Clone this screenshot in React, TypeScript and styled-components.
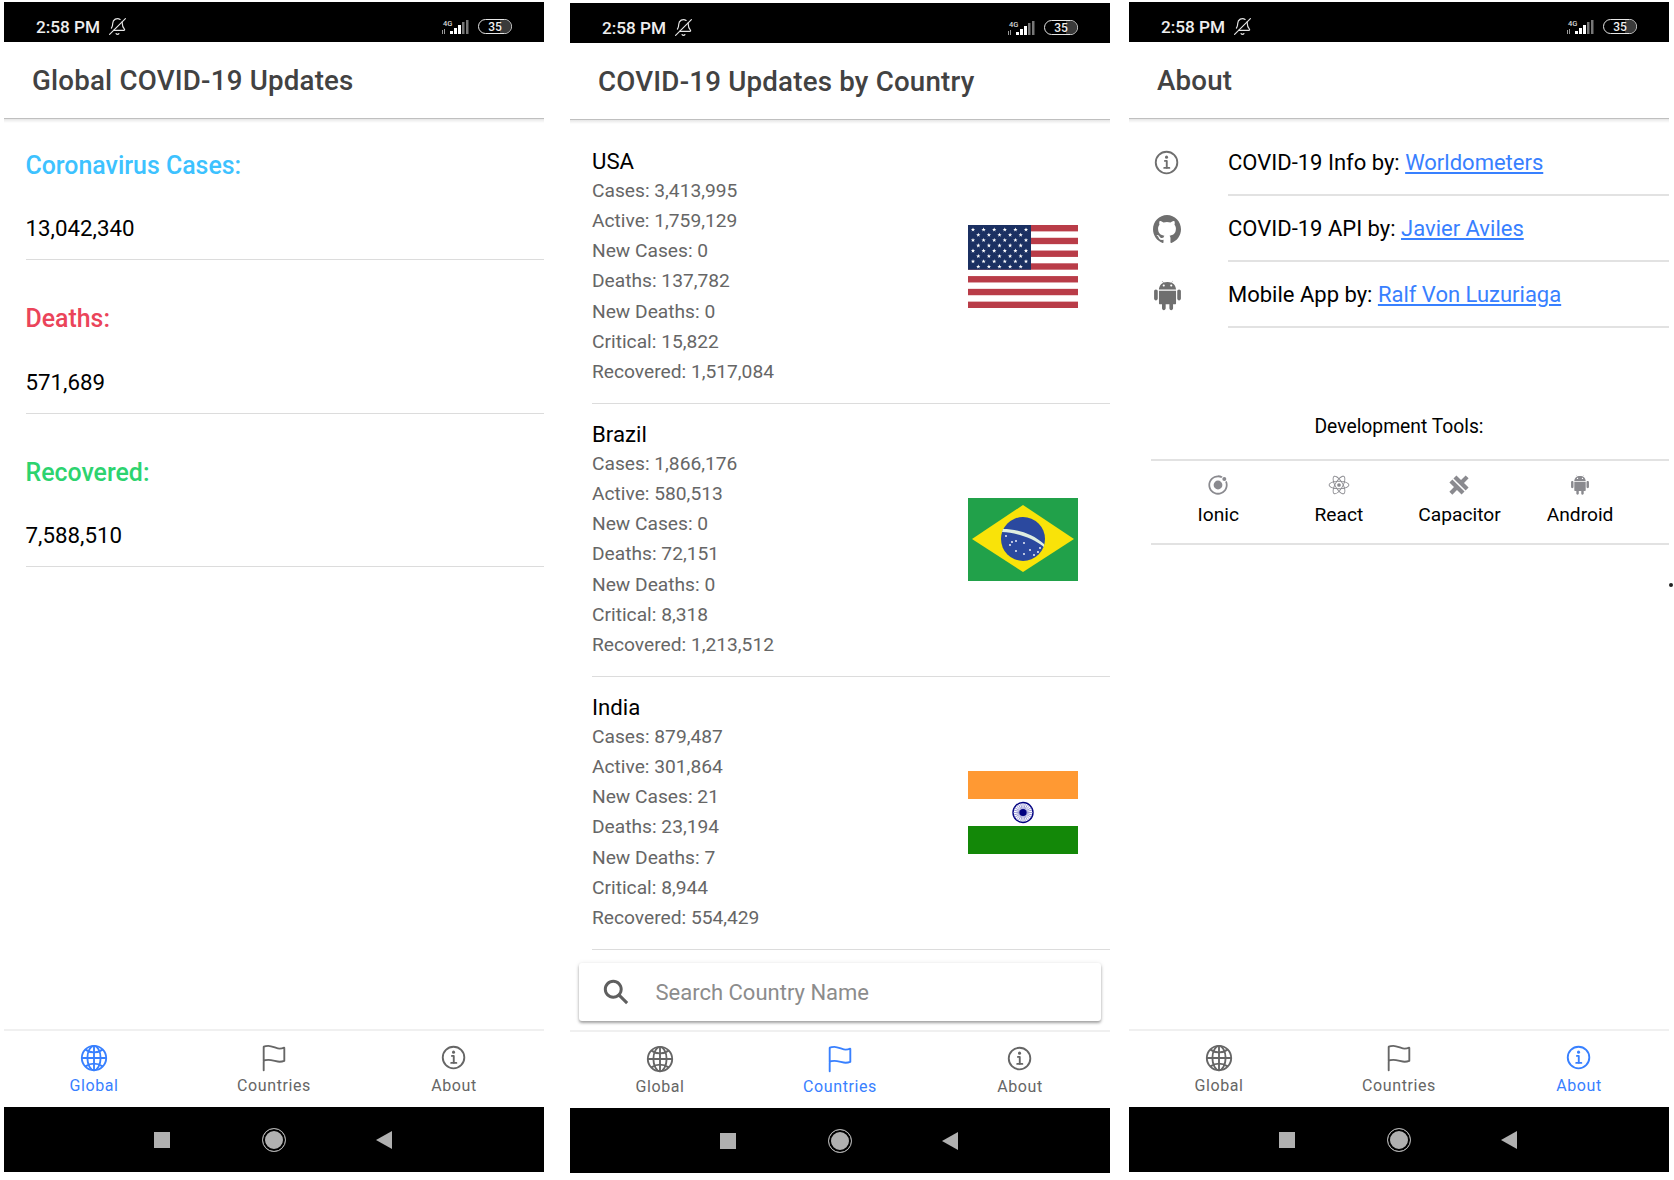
import React from "react";
import styled, { createGlobalStyle } from "styled-components";
import {
  IoGlobeOutline,
  IoFlagOutline,
  IoInformationCircleOutline,
  IoLogoGithub,
  IoLogoIonic,
  IoLogoReact,
  IoLogoCapacitor,
  IoSearchSharp,
} from "react-icons/io5";
import { IoLogoAndroid } from "react-icons/io";
import { BellOff } from "lucide-react";

const GlobalStyle = createGlobalStyle`
  html, body {
    margin: 0;
    padding: 0;
    background: #fff;
    font-family: Roboto, "Liberation Sans", sans-serif;
  }
  * { box-sizing: border-box; }
`;

type TabName = "Global" | "Countries" | "About";

const TABS: { name: TabName; Icon: React.ComponentType<{ size?: number }> }[] = [
  { name: "Global", Icon: IoGlobeOutline },
  { name: "Countries", Icon: IoFlagOutline },
  { name: "About", Icon: IoInformationCircleOutline },
];

const GLOBAL_STATS = [
  { label: "Coronavirus Cases:", value: "13,042,340", color: "#3dc2ff" },
  { label: "Deaths:", value: "571,689", color: "#eb445a" },
  { label: "Recovered:", value: "7,588,510", color: "#2dd36f" },
];

const USFlag = () => {
  const stars: React.ReactNode[] = [];
  for (let row = 0; row < 9; row++) {
    const count = row % 2 === 0 ? 6 : 5;
    for (let col = 0; col < count; col++) {
      const x = (row % 2 === 0 ? 5 : 10.3) + col * 10.6;
      const y = 4.6 + row * 5.3;
      stars.push(
        <polygon
          key={`${row}-${col}`}
          transform={`translate(${x} ${y})`}
          points="0,-2.2 0.6,-0.7 2.1,-0.7 0.9,0.3 1.3,1.9 0,0.9 -1.3,1.9 -0.9,0.3 -2.1,-0.7 -0.6,-0.7"
          fill="#fff"
        />
      );
    }
  }
  return (
    <svg width="110" height="83" viewBox="0 0 110 83">
      <rect width="110" height="83" fill="#fff" />
      {[0, 2, 4, 6, 8, 10, 12].map((i) => (
        <rect key={i} y={(i * 83) / 13} width="110" height={83 / 13} fill="#b93c48" />
      ))}
      <rect width="63" height={(83 / 13) * 7} fill="#1b3062" />
      {stars}
    </svg>
  );
};

const BrazilFlag = () => (
  <svg width="110" height="83" viewBox="0 0 110 83">
    <rect width="110" height="83" fill="#21a14a" />
    <polygon points="55,7 106,41 55,74 4,41" fill="#f9e309" />
    <circle cx="55" cy="41" r="22" fill="#2b499f" />
    <path d="M35 31 C 50 31, 65 36, 76 46 L 76 49 C 65 40, 50 35, 34 34 Z" fill="#dfeee0" />
    {[
      [38, 38], [42, 47], [48, 43], [48, 53], [56, 45], [62, 52], [66, 57], [70, 54], [56, 56], [44, 44], [72, 50],
    ].map(([cx, cy], i) => (
      <circle key={i} cx={cx} cy={cy} r="0.9" fill="#fff" />
    ))}
  </svg>
);

const IndiaFlag = () => (
  <svg width="110" height="83" viewBox="0 0 110 83">
    <rect width="110" height="28" fill="#ff9933" />
    <rect y="28" width="110" height="27" fill="#fff" />
    <rect y="55" width="110" height="28" fill="#138808" />
    <circle cx="55" cy="41.5" r="10" fill="#fff" stroke="#000080" strokeWidth="1.4" />
    {Array.from({ length: 12 }).map((_, i) => (
      <line
        key={i}
        x1="55"
        y1="32"
        x2="55"
        y2="51"
        stroke="#7a7ac8"
        strokeWidth="0.7"
        transform={`rotate(${i * 15} 55 41.5)`}
      />
    ))}
    <circle cx="55" cy="41.5" r="3.6" fill="#000080" />
  </svg>
);

const COUNTRIES = [
  {
    name: "USA",
    Flag: USFlag,
    lines: ["Cases: 3,413,995", "Active: 1,759,129", "New Cases: 0", "Deaths: 137,782", "New Deaths: 0", "Critical: 15,822", "Recovered: 1,517,084"],
  },
  {
    name: "Brazil",
    Flag: BrazilFlag,
    lines: ["Cases: 1,866,176", "Active: 580,513", "New Cases: 0", "Deaths: 72,151", "New Deaths: 0", "Critical: 8,318", "Recovered: 1,213,512"],
  },
  {
    name: "India",
    Flag: IndiaFlag,
    lines: ["Cases: 879,487", "Active: 301,864", "New Cases: 21", "Deaths: 23,194", "New Deaths: 7", "Critical: 8,944", "Recovered: 554,429"],
  },
];

const CREDITS = [
  { Icon: IoInformationCircleOutline, size: 30, text: "COVID-19 Info by:", link: "Worldometers" },
  { Icon: IoLogoGithub, size: 32, text: "COVID-19 API by:", link: "Javier Aviles" },
  { Icon: IoLogoAndroid, size: 39, text: "Mobile App by:", link: "Ralf Von Luzuriaga" },
];

const TOOLS = [
  { Icon: IoLogoIonic, size: 22, name: "Ionic" },
  { Icon: IoLogoReact, size: 22, name: "React" },
  { Icon: IoLogoCapacitor, size: 22, name: "Capacitor" },
  { Icon: IoLogoAndroid, size: 26, name: "Android" },
];

const SignalIcon = () => (
  <svg width="28" height="16" viewBox="0 0 28 16">
    <text x="2" y="7" fontSize="7.5" fontWeight="500" fill="#d8d8d8" fontFamily="Roboto, sans-serif">4G</text>
    <rect x="1" y="11" width="1" height="4" fill="#999" />
    <rect x="3" y="10" width="1" height="5" fill="#999" />
    <rect x="9" y="12" width="3" height="3" fill="#fff" />
    <rect x="13" y="9" width="3" height="6" fill="#fff" />
    <rect x="17" y="6" width="3" height="9" fill="#fff" />
    <rect x="21" y="3" width="2.5" height="12" fill="#777" />
    <rect x="25" y="1" width="2.5" height="14" fill="#777" />
  </svg>
);

const StatusIcons = () => (
  <StatusRight>
    <SignalIcon />
    <Battery>
      <BatteryLevel />
      <BatteryText>35</BatteryText>
    </Battery>
  </StatusRight>
);

const Phone: React.FC<{
  active: TabName;
  title: string;
  left: number;
  top: number;
  children: React.ReactNode;
}> = ({ active, title, left, top, children }) => (
  <PhoneFrame $left={left} $top={top}>
    <StatusBar>
      <Time>2:58 PM</Time>
      <MutedBell size={19} strokeWidth={1.5} color="#e4e4e4" />
      <StatusIcons />
    </StatusBar>
    <Header>
      <Title>{title}</Title>
    </Header>
    <Content>{children}</Content>
    <TabBar>
      {TABS.map(({ name, Icon }) => (
        <Tab key={name} $active={name === active}>
          <Icon size={30} />
          <span>{name}</span>
        </Tab>
      ))}
    </TabBar>
    <NavBar>
      <NavSquare />
      <NavCircle />
      <NavBack />
    </NavBar>
  </PhoneFrame>
);

const App: React.FC = () => (
  <Page>
    <GlobalStyle />
    <Phone active="Global" title="Global COVID-19 Updates" left={4} top={2}>
      {GLOBAL_STATS.map((s) => (
        <StatBlock key={s.label}>
          <StatLabel $color={s.color}>{s.label}</StatLabel>
          <StatValue>{s.value}</StatValue>
        </StatBlock>
      ))}
    </Phone>

    <Phone active="Countries" title="COVID-19 Updates by Country" left={26} top={3}>
      <CountryList>
        {COUNTRIES.map(({ name, lines, Flag }) => (
          <CountryRow key={name}>
            <CountryInfo>
              <CountryName>{name}</CountryName>
              {lines.map((l) => (
                <CountryLine key={l}>{l}</CountryLine>
              ))}
            </CountryInfo>
            <FlagBox>
              <Flag />
            </FlagBox>
          </CountryRow>
        ))}
      </CountryList>
      <SearchWrap>
        <SearchCard>
          <IoSearchSharp size={30} color="#5f5f5f" />
          <SearchText>Search Country Name</SearchText>
        </SearchCard>
      </SearchWrap>
    </Phone>

    <Phone active="About" title="About" left={19} top={2}>
      <CreditList>
        {CREDITS.map(({ Icon, size, text, link }) => (
          <CreditRow key={link}>
            <CreditIcon>
              <Icon size={size} />
            </CreditIcon>
            <CreditText>
              {text}&nbsp;<CreditLink>{link}</CreditLink>
            </CreditText>
          </CreditRow>
        ))}
      </CreditList>
      <ToolsTitle>Development Tools:</ToolsTitle>
      <ToolsGrid>
        {TOOLS.map(({ Icon, size, name }) => (
          <Tool key={name}>
            <ToolIcon>
              <Icon size={size} />
            </ToolIcon>
            <ToolName>{name}</ToolName>
          </Tool>
        ))}
      </ToolsGrid>
    </Phone>
    <StrayDot />
  </Page>
);

const Page = styled.div`
  position: relative;
  display: flex;
  align-items: flex-start;
  width: 1674px;
  height: 1180px;
  overflow: hidden;
  background: #fff;
`;

const PhoneFrame = styled.div<{ $left: number; $top: number }>`
  display: flex;
  flex-direction: column;
  flex: none;
  width: 540px;
  height: 1170px;
  margin-left: ${(p) => p.$left}px;
  margin-top: ${(p) => p.$top}px;
  background: #fff;
`;

const StatusBar = styled.div`
  display: flex;
  align-items: center;
  gap: 8px;
  flex: none;
  height: 40px;
  padding: 9px 32px 0 32px;
  background: #000;
`;

const Time = styled.span`
  color: #eeeeee;
  font-size: 17.2px;
  font-weight: 500;
`;

const MutedBell = styled(BellOff)`
  transform: scaleX(-1);
`;

const StatusRight = styled.div`
  display: flex;
  align-items: center;
  gap: 9px;
  margin-left: auto;
`;

const Battery = styled.div`
  position: relative;
  display: flex;
  align-items: center;
  justify-content: center;
  width: 34px;
  height: 15px;
  border: 1.5px solid #e6e6e6;
  border-radius: 8px;
  overflow: hidden;
`;

const BatteryLevel = styled.div`
  position: absolute;
  top: 0;
  right: 0;
  bottom: 0;
  width: 11px;
  background: #3a3a3a;
`;

const BatteryText = styled.span`
  position: relative;
  color: #f0f0f0;
  font-size: 12px;
  font-weight: 500;
`;

const Header = styled.div`
  position: relative;
  z-index: 1;
  display: flex;
  align-items: center;
  flex: none;
  height: 77px;
  padding: 0 28px;
  background: #fff;
  border-bottom: 1px solid #d6d6d6;

  &::after {
    content: "";
    position: absolute;
    top: 100%;
    left: 0;
    right: 0;
    height: 5px;
    background: linear-gradient(rgba(0, 0, 0, 0.12), rgba(0, 0, 0, 0));
  }
`;

const Title = styled.h1`
  margin: 0;
  color: #424242;
  font-size: 27.7px;
  font-weight: 500;
  letter-spacing: 0.2px;
`;

const Content = styled.div`
  display: flex;
  flex-direction: column;
  flex: 1;
  min-height: 0;
`;

const StatBlock = styled.div`
  margin-left: 21.5px;
  padding: 47px 0 17px;
  border-bottom: 1px solid #dcdcdc;

  &:first-child {
    padding-top: 35px;
  }
`;

const StatLabel = styled.div<{ $color: string }>`
  margin-bottom: 36.4px;
  color: ${(p) => p.$color};
  font-size: 24.9px;
  font-weight: 500;
  line-height: 24px;
`;

const StatValue = styled.div`
  color: #000;
  font-size: 22.3px;
  line-height: 28px;
`;

const CountryList = styled.div`
  flex: 1;
  min-height: 0;
  padding-top: 11px;
  overflow: hidden;
`;

const CountryRow = styled.div`
  display: flex;
  align-items: center;
  justify-content: space-between;
  height: 273px;
  margin-left: 22px;
  padding-right: 32px;
  border-bottom: 1px solid #dcdcdc;
`;

const CountryInfo = styled.div`
  display: flex;
  flex-direction: column;
`;

const CountryName = styled.div`
  margin-bottom: 1px;
  color: #000;
  font-size: 22.2px;
  line-height: 28px;
`;

const CountryLine = styled.div`
  color: #666;
  font-size: 19.2px;
  line-height: 30.25px;
`;

const FlagBox = styled.div`
  display: flex;
  flex: none;
  margin-bottom: 2px;
`;

const SearchWrap = styled.div`
  flex: none;
  padding: 12px 9px 9px;
`;

const SearchCard = styled.div`
  display: flex;
  align-items: center;
  gap: 25px;
  height: 58px;
  padding-left: 21.5px;
  background: #fff;
  border-radius: 3px;
  box-shadow: 0 2px 3px 0 rgba(0, 0, 0, 0.35), 0 0 5px rgba(0, 0, 0, 0.08);
`;

const SearchText = styled.span`
  color: #8c8c8c;
  font-size: 22px;
`;

const TabBar = styled.div`
  display: grid;
  grid-template-columns: repeat(3, 1fr);
  flex: none;
  height: 78px;
  border-top: 2px solid #f0f0f0;
  background: #fff;
`;

const Tab = styled.div<{ $active: boolean }>`
  display: flex;
  flex-direction: column;
  align-items: center;
  padding-top: 12px;
  color: ${(p) => (p.$active ? "#3880ff" : "#666")};
  font-size: 16px;
  letter-spacing: 0.6px;
  line-height: 22px;

  svg {
    margin-bottom: 2px;
  }
`;

const NavBar = styled.div`
  display: flex;
  align-items: center;
  gap: 92px;
  flex: none;
  height: 65px;
  padding-left: 150px;
  background: #000;
`;

const NavSquare = styled.div`
  width: 16px;
  height: 16px;
  background: #b0b0b0;
`;

const NavCircle = styled.div`
  width: 24px;
  height: 24px;
  background: #b0b0b0;
  border: 1.5px solid #b0b0b0;
  border-radius: 50%;
  box-shadow: inset 0 0 0 2px #000;
`;

const NavBack = styled.div`
  width: 0;
  height: 0;
  margin-left: -2px;
  border-top: 9px solid transparent;
  border-bottom: 9px solid transparent;
  border-right: 16px solid #b0b0b0;
`;

const CreditList = styled.div`
  padding-top: 11px;
`;

const CreditRow = styled.div`
  display: flex;
  align-items: stretch;
  height: 66px;
`;

const CreditIcon = styled.div`
  display: flex;
  align-items: center;
  justify-content: center;
  flex: none;
  width: 76px;
  color: #6f6f6f;
`;

const CreditText = styled.div`
  display: flex;
  align-items: center;
  flex: 1;
  margin-left: 23px;
  border-bottom: 2px solid #e2e2e2;
  color: #000;
  font-size: 22px;
`;

const CreditLink = styled.span`
  color: #3880ff;
  text-decoration: underline;
`;

const ToolsTitle = styled.div`
  margin: 87px 0 0 22px;
  padding: 0 22px 20px 0;
  border-bottom: 2px solid #e2e2e2;
  color: #000;
  font-size: 19.3px;
  line-height: 24px;
  text-align: center;
`;

const ToolsGrid = styled.div`
  display: grid;
  grid-template-columns: repeat(4, 120.6px);
  margin-left: 22px;
  padding: 13px 0 16px 7px;
  border-bottom: 2px solid #e2e2e2;
`;

const Tool = styled.div`
  display: flex;
  flex-direction: column;
  align-items: center;
  color: #8a8a8f;
`;

const ToolIcon = styled.div`
  display: flex;
  align-items: center;
  justify-content: center;
  height: 22px;
`;

const ToolName = styled.span`
  margin-top: 7px;
  color: #000;
  font-size: 19.2px;
  line-height: 24px;
`;

const StrayDot = styled.div`
  position: absolute;
  left: 1669px;
  top: 583px;
  width: 4px;
  height: 4px;
  background: #222;
  border-radius: 50%;
`;

export default App;
